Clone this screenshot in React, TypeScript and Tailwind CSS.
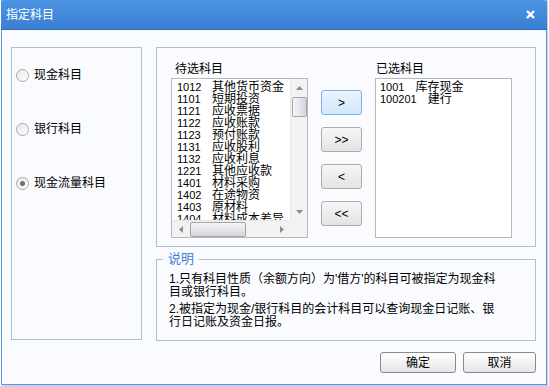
import React from 'react';

const FONT = "font-['Liberation_Sans','Noto_Sans_CJK_SC',sans-serif]";

const pending: [string, string][] = [
  ['1012', '其他货币资金'],
  ['1101', '短期投资'],
  ['1121', '应收票据'],
  ['1122', '应收账款'],
  ['1123', '预付账款'],
  ['1131', '应收股利'],
  ['1132', '应收利息'],
  ['1221', '其他应收款'],
  ['1401', '材料采购'],
  ['1402', '在途物资'],
  ['1403', '原材料'],
  ['1404', '材料成本差异'],
];

const chosen: [string, string][] = [
  ['1001', '库存现金'],
  ['100201', '建行'],
];

const Arrow = ({ dir }: { dir: 'up' | 'down' | 'left' | 'right' }) => {
  const pts = {
    up: '0,4 3.5,0 7,4',
    down: '0,0 3.5,4 7,0',
    left: '4,0 0,3.5 4,7',
    right: '0,0 4,3.5 0,7',
  }[dir];
  const vertical = dir === 'up' || dir === 'down';
  return (
    <svg width={vertical ? 7 : 4} height={vertical ? 4 : 7} viewBox={vertical ? '0 0 7 4' : '0 0 4 7'}>
      <polygon points={pts} fill="#8c8c8c" />
    </svg>
  );
};

const Radio = ({ label, checked }: { label: string; checked?: boolean }) => (
  <div className="flex items-center h-[14px]">
    <div className="w-[13px] h-[13px] rounded-full border border-[#a8a8a8] bg-gradient-to-br from-[#e8e8e8] to-white flex items-center justify-center ml-[4px]">
      {checked && <div className="w-[5px] h-[5px] rounded-full bg-[#6e6e6e]" />}
    </div>
    <span className="ml-[5px] text-[12px] leading-[14px] text-black">{label}</span>
  </div>
);

const MoveButton = ({ text, active }: { text: string; active?: boolean }) => (
  <button
    className={
      active
        ? 'w-[41px] h-[25px] rounded-[3px] border border-[#7db2e8] bg-gradient-to-b from-[#eaf4fe] to-[#d3e7fb] text-[12px] text-black flex items-center justify-center'
        : 'w-[41px] h-[25px] rounded-[3px] border border-[#acacac] bg-gradient-to-b from-[#f6f6f6] to-[#e4e4e4] text-[12px] text-black flex items-center justify-center'
    }
  >
    {text}
  </button>
);

const Row = ({ code, name, fixed }: { code: string; name: string; fixed?: boolean }) => (
  <div className="flex h-[12px] items-center whitespace-nowrap">
    <span className={fixed ? 'inline-block w-[35px] text-[11px] leading-[12px]' : 'inline-block mr-[11px] text-[11px] leading-[12px]'}>{code}</span>
    <span className="text-[12px] leading-[12px]">{name}</span>
  </div>
);

export default function App() {
  return (
    <div className={`w-[549px] h-[386px] bg-white ${FONT}`}>
      <div className="ml-[1px] w-[546px] h-[385px] flex flex-col border-x border-b border-[#5a98e4] bg-[#f9fbfe] shadow-[1px_1px_0_#b9d2f0]">
        {/* title bar */}
        <div className="h-[30px] -mx-[1px] flex items-center justify-between bg-gradient-to-b from-[#4c95e3] to-[#3b7fd3] border-b border-[#2f6cbc] rounded-t-[3px]">
          <span className="ml-[5px] text-white text-[12px] leading-[14px]">指定科目</span>
          <svg className="mr-[12px]" width="9" height="9" viewBox="0 0 9 9">
            <path d="M1 1 L8 8 M8 1 L1 8" stroke="white" strokeWidth="2.4" />
          </svg>
        </div>

        <div className="flex pt-[17px] pl-[9px] gap-[14px]">
          {/* left: subject type */}
          <div className="w-[131px] h-[293px] border border-[#aac0d8] flex flex-col pt-[20px] gap-[40px]">
            <Radio label="现金科目" />
            <Radio label="银行科目" />
            <Radio label="现金流量科目" checked />
          </div>

          {/* right column */}
          <div className="w-[380px] flex flex-col">
            <div className="h-[200px] border border-[#aac0d8] flex pl-[14px] pt-[14px]">
              <div className="flex flex-col">
                <span className="ml-[4px] text-[12px] leading-[14px]">待选科目</span>
                <div className="mt-[2px] w-[137px] h-[160px] border border-[#b8b8b8] bg-white flex flex-col">
                  <div className="flex flex-1 min-h-0">
                    <div className="flex-1 overflow-hidden pl-[5px] pt-[2px]">
                      {pending.map(([c, n]) => (
                        <Row key={c} code={c} name={n} fixed />
                      ))}
                    </div>
                    <div className="w-[17px] bg-[#f2f2f2] border-l border-[#e6e6e6] flex flex-col items-center">
                      <div className="h-[17px] flex items-center justify-center">
                        <Arrow dir="up" />
                      </div>
                      <div className="mt-[1px] w-[15px] h-[20px] rounded-[2px] border border-[#a5a5a5] bg-gradient-to-r from-[#f6f6f8] to-[#d5d5df]" />
                      <div className="flex-1" />
                      <div className="h-[17px] flex items-center justify-center">
                        <Arrow dir="down" />
                      </div>
                    </div>
                  </div>
                  <div className="h-[17px] flex">
                    <div className="flex-1 bg-[#f2f2f2] border-t border-[#e6e6e6] flex items-center">
                      <div className="w-[17px] flex items-center justify-center">
                        <Arrow dir="left" />
                      </div>
                      <div className="ml-[1px] w-[56px] h-[15px] rounded-[2px] border border-[#a5a5a5] bg-gradient-to-b from-[#f6f6f8] to-[#d5d5df]" />
                      <div className="flex-1" />
                      <div className="w-[17px] flex items-center justify-center">
                        <Arrow dir="right" />
                      </div>
                    </div>
                    <div className="w-[17px] bg-[#f2f2f2]" />
                  </div>
                </div>
              </div>

              <div className="ml-[13px] mt-[28px] flex flex-col gap-[12px]">
                <MoveButton text=">" active />
                <MoveButton text=">>" />
                <MoveButton text="<" />
                <MoveButton text="<<" />
              </div>

              <div className="ml-[13px] flex flex-col">
                <span className="ml-[1px] text-[12px] leading-[14px]">已选科目</span>
                <div className="mt-[2px] w-[137px] h-[160px] border border-[#b8b8b8] bg-white pl-[4px] pt-[2px]">
                  {chosen.map(([c, n]) => (
                    <Row key={c} code={c} name={n} />
                  ))}
                </div>
              </div>
            </div>

            <fieldset className="mt-[5px] h-[89px] border border-[#aac0d8] pl-[12px]">
              <legend className="ml-[-6px] px-[5px] text-[13px] leading-[14px] text-[#3f7fd9]">说明</legend>
              <div className="mt-[7px] text-[12px] leading-[13px] text-black">
                <p>1.只有科目性质（余额方向）为'借方'的科目可被指定为现金科</p>
                <p>目或银行科目。</p>
                <p className="mt-[4px]">2.被指定为现金/银行科目的会计科目可以查询现金日记账、银</p>
                <p>行日记账及资金日报。</p>
              </div>
            </fieldset>
          </div>
        </div>

        <div className="flex justify-end gap-[7px] pr-[10px] mt-[11px]">
          <button className="w-[76px] h-[21px] rounded-[3px] border border-[#8a8a8a] bg-gradient-to-b from-white to-[#e6e6e6] text-[12px] leading-[14px]">确定</button>
          <button className="w-[73px] h-[21px] rounded-[3px] border border-[#8a8a8a] bg-gradient-to-b from-white to-[#e6e6e6] text-[12px] leading-[14px]">取消</button>
        </div>
      </div>
    </div>
  );
}
